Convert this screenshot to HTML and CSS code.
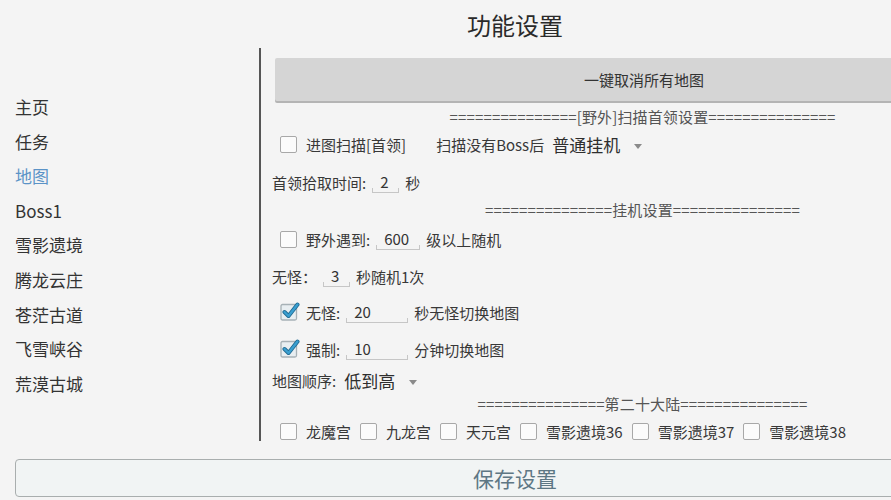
FILE: index.html
```html
<!DOCTYPE html>
<html lang="zh-CN">
<head>
    <meta charset="UTF-8">
    <meta name="viewport" content="width=device-width, initial-scale=1.0">
    <title>功能设置</title>
    <link rel="stylesheet" href="styles.css">
</head>
<body>
    <div class="screen">
        <div class="title">功能设置</div>

        <div class="main">
            <div class="nav">
                <div class="nav-item">主页</div>
                <div class="nav-item">任务</div>
                <div class="nav-item active">地图</div>
                <div class="nav-item">Boss1</div>
                <div class="nav-item">雪影遗境</div>
                <div class="nav-item">腾龙云庄</div>
                <div class="nav-item">苍茫古道</div>
                <div class="nav-item">飞雪峡谷</div>
                <div class="nav-item">荒漠古城</div>
            </div>

            <div class="content">
                <button class="btn-clear">一键取消所有地图</button>

                <div class="section mt-6">===============[野外]扫描首领设置===============</div>
                <div class="row indent mt-3">
                    <span class="check"></span>
                    <span class="label">进图扫描[首领]</span>
                    <span class="label spaced">扫描没有Boss后</span>
                    <span class="select">普通挂机</span>
                </div>
                <div class="row mt-10">
                    <span class="label">首领拾取时间:</span>
                    <span class="field w-xs">2</span>
                    <span class="label">秒</span>
                </div>

                <div class="section mt-4">===============挂机设置===============</div>
                <div class="row indent mt-5">
                    <span class="check"></span>
                    <span class="label">野外遇到:</span>
                    <span class="field w-s">600</span>
                    <span class="label">级以上随机</span>
                </div>
                <div class="row mt-9">
                    <span class="label">无怪：</span>
                    <span class="field w-xs">3</span>
                    <span class="label">秒随机1次</span>
                </div>
                <div class="row indent mt-8">
                    <span class="check on">
                        <svg viewBox="0 0 20 20" width="20" height="20">
                            <rect x="1" y="3.5" width="15.5" height="15.5" rx="1.5" fill="#e8eef1" stroke="#a7b1b6" stroke-width="1.3"/>
                            <path d="M4.5 11 L8.5 15 L17.5 3.5" fill="none" stroke="#1f6890" stroke-width="4" stroke-linecap="round" stroke-linejoin="round"/>
                            <path d="M4.5 11 L8.5 15 L17.5 3.5" fill="none" stroke="#3a9fd0" stroke-width="2.4" stroke-linecap="round" stroke-linejoin="round"/>
                        </svg>
                    </span>
                    <span class="label">无怪:</span>
                    <span class="field w-m">20</span>
                    <span class="label">秒无怪切换地图</span>
                </div>
                <div class="row indent mt-9">
                    <span class="check on">
                        <svg viewBox="0 0 20 20" width="20" height="20">
                            <rect x="1" y="3.5" width="15.5" height="15.5" rx="1.5" fill="#e8eef1" stroke="#a7b1b6" stroke-width="1.3"/>
                            <path d="M4.5 11 L8.5 15 L17.5 3.5" fill="none" stroke="#1f6890" stroke-width="4" stroke-linecap="round" stroke-linejoin="round"/>
                            <path d="M4.5 11 L8.5 15 L17.5 3.5" fill="none" stroke="#3a9fd0" stroke-width="2.4" stroke-linecap="round" stroke-linejoin="round"/>
                        </svg>
                    </span>
                    <span class="label">强制:</span>
                    <span class="field w-m">10</span>
                    <span class="label">分钟切换地图</span>
                </div>
                <div class="row mt-3">
                    <span class="label">地图顺序:</span>
                    <span class="select">低到高</span>
                </div>

                <div class="section">===============第二十大陆===============</div>
                <div class="row short indent mt-7">
                    <span class="check"></span><span class="label">龙魔宫</span>
                    <span class="check"></span><span class="label">九龙宫</span>
                    <span class="check"></span><span class="label">天元宫</span>
                    <span class="check"></span><span class="label">雪影遗境36</span>
                    <span class="check"></span><span class="label">雪影遗境37</span>
                    <span class="check"></span><span class="label">雪影遗境38</span>
                </div>
            </div>
        </div>

        <button class="btn-save">保存设置</button>
    </div>
</body>
</html>
```

FILE: styles.css
```css
html, body {
    margin: 0;
    overflow: hidden;
    background-color: #f4f4f4;
}
body {
    font-family: "Noto Sans CJK SC", "Noto Sans", sans-serif;
    color: #333;
}
/* the app screen is wider than the captured window */
.screen {
    width: 1030px;
}
.title {
    height: 48px;
    line-height: 50px;
    text-align: center;
    font-size: 24px;
    color: #2a2a2a;
}
.main {
    display: grid;
    grid-template-columns: 259px 1fr;
    height: 393px;
}
.nav {
    padding: 42px 0 0 15px;
}
.nav-item {
    height: 34.6px;
    line-height: 34.6px;
    font-size: 17px;
    color: #333;
}
.nav-item.active {
    color: #5b93c7;
}
.content {
    border-left: 2px solid #555;
    padding: 10px 17px 0 11px;
    overflow: hidden;
    display: flex;
    flex-direction: column;
}
.btn-clear {
    margin-left: 3px;
    height: 43px;
    flex-shrink: 0;
    border: none;
    border-radius: 2px;
    background-color: #d5d5d5;
    box-shadow: 0 2px 0 #b4b4b4;
    font-family: inherit;
    font-size: 15px;
    color: #333;
}
.section {
    height: 20px;
    line-height: 20px;
    flex-shrink: 0;
    text-align: center;
    font-size: 15px;
    letter-spacing: 0.15px;
    color: #555;
    white-space: nowrap;
}
.row {
    height: 28px;
    flex-shrink: 0;
    display: flex;
    align-items: center;
    gap: 6px;
    font-size: 15px;
    white-space: nowrap;
}
.row.short {
    height: 20px;
}
.row.indent {
    padding-left: 8px;
}
.mt-3 { margin-top: 3px; }
.mt-4 { margin-top: 4px; }
.mt-5 { margin-top: 5px; }
.mt-6 { margin-top: 6px; }
.mt-7 { margin-top: 7px; }
.mt-8 { margin-top: 8px; }
.mt-9 { margin-top: 9px; }
.mt-10 { margin-top: 10px; }

.check {
    width: 17px;
    height: 17px;
    box-sizing: border-box;
    border: 1.5px solid #a8a8a8;
    border-radius: 2px;
    background-color: #fbfbfb;
    flex-shrink: 0;
}
.check.on {
    border: none;
    background: none;
}
.check.on svg {
    display: block;
    margin: -3px 0 0 0;
}
.check + .label,
.label + .check {
    margin-left: 3px;
}
.label {
    color: #383838;
}
.label.spaced {
    margin-left: 24px;
}
.field {
    position: relative;
    height: 22px;
    line-height: 22px;
    padding-left: 8px;
    box-sizing: border-box;
    border-bottom: 1px solid #c6c6c6;
    color: #333;
}
.field::before,
.field::after {
    content: '';
    position: absolute;
    bottom: 0;
    width: 1px;
    height: 4px;
    background-color: #c6c6c6;
}
.field::before { left: 0; }
.field::after { right: 0; }
.w-xs { width: 27px; }
.w-s { width: 44px; }
.w-m { width: 62px; }

.select {
    margin-left: 2px;
    font-size: 17px;
    color: #2e2e2e;
}
.select::after {
    content: '';
    display: inline-block;
    margin-left: 14px;
    vertical-align: middle;
    border-left: 4px solid transparent;
    border-right: 4px solid transparent;
    border-top: 5px solid #8a8a8a;
}
.btn-save {
    display: block;
    width: 1000px;
    height: 38px;
    margin: 18px 0 0 15px;
    border: 1px solid #a9aeae;
    border-radius: 4px;
    background-color: #f1f4f4;
    font-family: inherit;
    font-size: 21px;
    color: #5e7784;
}
```
